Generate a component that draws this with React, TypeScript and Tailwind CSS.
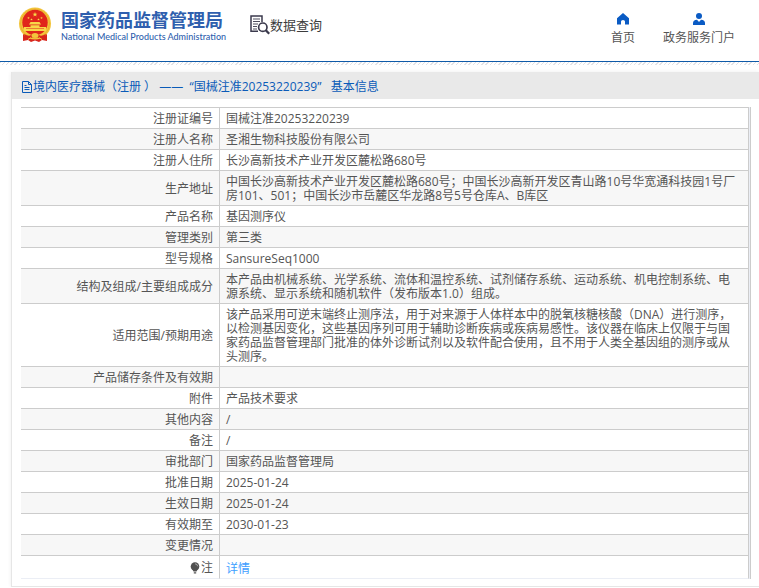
import React from "react";

const rows = [
  { label: "注册证编号", value: "国械注准20253220239" },
  { label: "注册人名称", value: "圣湘生物科技股份有限公司" },
  { label: "注册人住所", value: "长沙高新技术产业开发区麓松路680号" },
  {
    label: "生产地址",
    value:
      "中国长沙高新技术产业开发区麓松路680号；中国长沙高新开发区青山路10号华宽通科技园1号厂房101、501；中国长沙市岳麓区华龙路8号5号仓库A、B库区",
  },
  { label: "产品名称", value: "基因测序仪" },
  { label: "管理类别", value: "第三类" },
  { label: "型号规格", value: "SansureSeq1000" },
  {
    label: "结构及组成/主要组成成分",
    value:
      "本产品由机械系统、光学系统、流体和温控系统、试剂储存系统、运动系统、机电控制系统、电源系统、显示系统和随机软件（发布版本1.0）组成。",
  },
  {
    label: "适用范围/预期用途",
    value:
      "该产品采用可逆末端终止测序法，用于对来源于人体样本中的脱氧核糖核酸（DNA）进行测序，以检测基因变化，这些基因序列可用于辅助诊断疾病或疾病易感性。该仪器在临床上仅限于与国家药品监督管理部门批准的体外诊断试剂以及软件配合使用，且不用于人类全基因组的测序或从头测序。",
  },
  { label: "产品储存条件及有效期", value: "" },
  { label: "附件", value: "产品技术要求" },
  { label: "其他内容", value: "/" },
  { label: "备注", value: "/" },
  { label: "审批部门", value: "国家药品监督管理局" },
  { label: "批准日期", value: "2025-01-24" },
  { label: "生效日期", value: "2025-01-24" },
  { label: "有效期至", value: "2030-01-23" },
  { label: "变更情况", value: "" },
];

const STAR = "M0 -1L.26 -.32L.95 -.31L.4 .12L.59 .81L0 .42L-.59 .81L-.4 .12L-.95 -.31L-.26 -.32Z";

const Emblem = () => (
  <svg viewBox="0 0 34 36" className="w-[34px] h-9 shrink-0" aria-hidden="true">
    <path d="M5 25L5 34L10 33L13 35L17 33.5L21 35L24 33L29 34L29 25Z" fill="#d8261c" />
    <circle cx="17" cy="16.5" r="16" fill="#f3c53c" />
    <circle cx="17" cy="16.5" r="14.5" fill="none" stroke="#e2a526" strokeWidth="0.6" />
    <circle cx="17" cy="15.5" r="12.7" fill="#e0251b" />
    <g fill="#f8d748">
      <path d={STAR} transform="translate(17 7.5) scale(2.6)" />
      <path d={STAR} transform="translate(10.5 11) scale(1.3)" />
      <path d={STAR} transform="translate(13.5 12.5) scale(1.3)" />
      <path d={STAR} transform="translate(20.5 12.5) scale(1.3)" />
      <path d={STAR} transform="translate(23.5 11) scale(1.3)" />
      <path d="M12.5 15H21.5L23 17.5H11ZM12.5 18.2H21.5V20H28V24H6V20H12.5Z" />
    </g>
    <path d="M8 21.5H26" stroke="#e0251b" strokeWidth="0.5" />
    <path d="M6 27Q11 30 13 28Q17 25 21 28Q23 30 28 27L27 30.5Q22 32 20 30.5H14Q12 32 7 30.5Z" fill="#d8261c" />
    <ellipse cx="17" cy="28.5" rx="3.5" ry="2.5" fill="#f3c53c" />
    <path d="M10 32.5L13 30.5M24 32.5L21 30.5" stroke="#f3c53c" strokeWidth="1" />
  </svg>
);

const SearchDoc = () => (
  <svg viewBox="0 0 20 20" className="w-5 h-5" fill="none" stroke="#3b3a4d" aria-hidden="true">
    <path d="M8 16.2H1V1H12V7" strokeWidth="1.5" />
    <path d="M3 4H10M3 6.5H10M3 9H8M3 11.5H7M3 14H7" strokeWidth="0.9" />
    <circle cx="12.8" cy="12.2" r="4.2" strokeWidth="1.7" />
    <path d="M15.8 15.2L19.2 18.8" strokeWidth="2.3" />
  </svg>
);

const HomeIcon = () => (
  <svg viewBox="0 0 12 12" className="w-3 h-3" fill="#0a5bc4" aria-hidden="true">
    <path d="M6 0L12 5.2V11.5H8V8.5Q8 7 6 7Q4 7 4 8.5V11.5H0V5.2Z" />
  </svg>
);

const UserIcon = () => (
  <svg viewBox="0 0 12 12" className="w-3 h-3" fill="#0a5bc4" aria-hidden="true">
    <circle cx="6" cy="3" r="3" />
    <path d="M0 12V10Q0 7 4 6.8L6 9L8 6.8Q12 7 12 10V12Z" />
  </svg>
);

const DocIcon = () => (
  <svg viewBox="0 0 12 12" className="w-3 h-3 shrink-0" fill="none" stroke="currentColor" aria-hidden="true">
    <path d="M1.5 .5H7.5L10.5 3.5V11.5H1.5ZM7.5 .5V3.5H10.5M3.5 4.5H5.5M3.5 6.5H8.5M3.5 8.5H8.5" />
  </svg>
);

const BulbIcon = () => (
  <svg viewBox="0 0 12 12" className="w-3 h-3" aria-hidden="true">
    <circle cx="6" cy="4.5" r="4.3" fill="#505050" />
    <path d="M3.5 7.5H8.5L7.5 9.5H4.5ZM4.8 10.2H7.2V11.5H4.8Z" fill="#505050" />
    <path d="M6 1.8Q8.5 2 8.7 4.3" fill="none" stroke="#ccc" strokeWidth="0.7" />
  </svg>
);

const Header = () => (
  <header>
    <div className="flex items-center justify-between h-[62px] pl-[18px] pr-6 pb-3 border-b border-[#0f5aa8]">
      <div className="flex items-center">
        <a href="/" className="flex items-center gap-[9px] text-[#2f5fae]">
          <Emblem />
          <span className="flex flex-col pt-[2px]">
            <span className="text-[18px] leading-[22px] font-bold">国家药品监督管理局</span>
            <span className="font-[family-name:Lato] text-[9px] leading-3 font-medium whitespace-nowrap">
              National Medical Products Administration
            </span>
          </span>
        </a>
        <a href="/datasearch" className="flex items-center ml-6 text-[13px] leading-5 text-[#3c3c3c]">
          <SearchDoc />
          数据查询
        </a>
      </div>
      <nav className="flex gap-7 text-xs text-[#555]">
        <a href="/home" className="flex flex-col items-center gap-[5px] pt-[9px]">
          <HomeIcon />
          首页
        </a>
        <a href="/portal" className="flex flex-col items-center gap-[5px] pt-[9px]">
          <UserIcon />
          政务服务门户
        </a>
      </nav>
    </div>
    <div className="h-[3px] bg-[repeating-linear-gradient(135deg,#e2e2e6_0_1px,#fff_1px_3px)]" />
  </header>
);

const App = () => {
  return (
    <div className="bg-white text-xs text-[#555] font-['Open_Sans','Noto_Sans_CJK_SC',sans-serif]">
      <Header />
      <main className="ml-[11px] mt-[7px] border-l border-b border-[#e6e6e6] shadow-[0_0_4px_#eee]">
        <h1 className="flex items-center h-[27px] pt-[2px] pl-[9px] bg-[#e9e9e9] text-[#0a5bb8] whitespace-pre">
          <DocIcon />
          {"境内医疗器械（注册 ） ——  “国械注准20253220239”   基本信息"}
        </h1>
        <div className="mt-2 ml-[9px] mr-2 mb-[7px] pr-px border-r border-[#ccc] bg-[#ebeef5]">
          <table className="w-full table-fixed border-separate border-spacing-0 bg-white leading-[14px] break-all">
            <tbody>
              {rows.map((row) => (
                <tr key={row.label} className="even:bg-[#f7f7f7]">
                  <th className="w-[199px] px-[6px] pt-1 pb-[2px] border-t border-r border-[#ccc] text-right font-normal">
                    {row.label}
                  </th>
                  <td className="pl-[6px] pr-2 pt-1 pb-[2px] border-t border-r border-[#ccc]">{row.value}</td>
                </tr>
              ))}
              <tr>
                <th className="h-6 px-[6px] pt-1 border-t border-r border-b border-[#ccc] border-b-[#ebeef5] text-right font-normal">
                  <span className="inline-flex items-center">
                    <BulbIcon />注
                  </span>
                </th>
                <td className="pl-[6px] pt-1 border-t border-r border-b border-[#ccc] border-b-[#ebeef5]">
                  <a href="#detail" className="text-[#409eff]">
                    详情
                  </a>
                </td>
              </tr>
            </tbody>
          </table>
        </div>
      </main>
    </div>
  );
};

export default App;
